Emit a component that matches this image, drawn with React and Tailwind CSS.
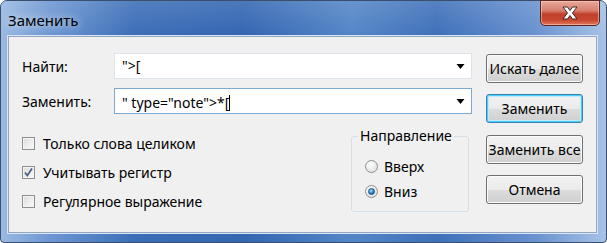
import React from "react";

const font = { fontFamily: '"Noto Sans", "Open Sans", sans-serif' };

function Arrow() {
  return (
    <svg width="9" height="5" viewBox="0 0 9 5" className="shrink-0">
      <path d="M0.5 0 H8.5 L4.5 5 Z" fill="#000" />
    </svg>
  );
}

function Combo({ value, focused, caret }) {
  return (
    <div
      className={
        "flex h-[26px] flex-1 items-center bg-white pl-[7px] pr-[6px] border " +
        (focused ? "border-[#7ea8d6]" : "border-[#dde3ea]")
      }
    >
      <span className="flex-1 whitespace-pre text-[14px] leading-none text-black">
        {value}
        {caret && <span className="inline-block h-[16px] w-px translate-y-[3px] bg-black" />}
      </span>
      <Arrow />
    </div>
  );
}

function Button({ children, def, className = "" }) {
  return (
    <div
      className={
        "flex h-[29px] w-[97px] items-center justify-center rounded-[3px] border text-[14px] text-black bg-[linear-gradient(#f2f2f2_0%,#ebebeb_50%,#dddddd_51%,#cfcfcf_100%)] " +
        (def
          ? "border-[#3c7fb1] shadow-[inset_0_0_0_1px_#48d0f8,inset_0_0_0_2px_#bfeafc] "
          : "border-[#707070] shadow-[inset_0_0_0_1px_#fbfbfb] ") +
        className
      }
    >
      {children}
    </div>
  );
}

function Check({ checked, label }) {
  return (
    <div className="flex h-[29px] items-center">
      <div className="flex h-[13px] w-[13px] items-center justify-center border border-[#8f8f8f] bg-[linear-gradient(135deg,#dcdcdc,#fbfbfb)] shadow-[inset_0_0_0_1px_#f4f4f4]">
        {checked && (
          <svg width="11" height="11" viewBox="0 0 11 11">
            <path d="M2 5.5 L4.3 8.5 L9 1.5" fill="none" stroke="#4d6185" strokeWidth="1.8" />
          </svg>
        )}
      </div>
      <span className="ml-[8px] text-[14px] text-black">{label}</span>
    </div>
  );
}

function Radio({ checked, label }) {
  return (
    <div className="flex h-[25px] items-center">
      <div className="flex h-[13px] w-[13px] items-center justify-center rounded-full border border-[#8f8f8f] bg-[radial-gradient(circle_at_40%_35%,#ffffff,#d8d8d8)]">
        {checked && (
          <div className="h-[7px] w-[7px] rounded-full border border-[#1c4f7f] bg-[radial-gradient(circle_at_40%_35%,#aee3ff,#1b7cc4_60%,#0c4f8a)]" />
        )}
      </div>
      <span className="ml-[6px] text-[14px] text-black">{label}</span>
    </div>
  );
}

export default function App() {
  return (
    <div style={font} className="relative h-[243px] w-[607px] overflow-hidden bg-[#ffffff]">
      <div className="flex h-[243px] w-[607px] flex-col rounded-t-[7px] rounded-b-[4px] border border-[#3b4e6b] bg-[linear-gradient(90deg,#9ab9e2_0%,#6d97d2_8%,#3c6eb7_22%,#3466b2_40%,#5486c7_58%,#3f70b9_72%,#6891cf_88%,#a7c2e6_100%)]">
        {/* title bar */}
        <div className="relative flex h-[34px] items-center bg-[linear-gradient(180deg,rgba(255,255,255,0.12),rgba(255,255,255,0))]">
          <span className="ml-[7px] mt-[4px] text-[15px] text-black [text-shadow:0_0_8px_rgba(255,255,255,0.9)]">
            Заменить
          </span>
          <div className="absolute right-[6px] top-[-1px] flex h-[26px] w-[60px] items-center justify-center rounded-b-[5px] border border-[#5a2620] bg-[linear-gradient(180deg,#e9a899_0%,#d7806f_40%,#c0402c_55%,#c9472f_80%,#e07a5e_100%)] shadow-[inset_0_0_0_1px_rgba(255,220,210,0.5)]">
            <svg width="20" height="14" viewBox="0 0 20 14">
              <path
                d="M3 1 H7.5 L10 4.5 L12.5 1 H17 L12.5 7 L17 13 H12.5 L10 9.5 L7.5 13 H3 L7.5 7 Z"
                fill="#ffffff"
                stroke="#3b2a2a"
                strokeWidth="1"
                strokeLinejoin="round"
              />
            </svg>
          </div>
        </div>
        {/* client */}
        <div className="ml-[6px] mr-[8px] h-[199px] border border-[#dbe6f4]">
          <div className="flex h-full border border-[#93a6bf] bg-[#f0f0f0] pl-[13px] pt-[16px]">
            <div className="flex w-[450px] flex-col">
              <div className="flex items-center">
                <span className="w-[92px] text-[14px] text-black">Найти:</span>
                <Combo value={'">['} />
              </div>
              <div className="mt-[9px] flex items-center">
                <span className="w-[92px] text-[14px] text-black">Заменить:</span>
                <Combo value={'" type="note">*['} focused caret />
              </div>
              <div className="mt-[9px] flex">
                <div className="mt-[6px] flex flex-1 flex-col">
                  <Check label="Только слова целиком" />
                  <Check checked label="Учитывать регистр" />
                  <Check label="Регулярное выражение" />
                </div>
                <div className="relative mr-[3px] mt-[13px] h-[76px] w-[118px] rounded-[3px] border border-[#d5dfe5]">
                  <span className="absolute left-[6px] top-[-11px] bg-[#f0f0f0] px-[2px] text-[14px] leading-[20px] text-black">
                    Направление
                  </span>
                  <div className="ml-[13px] mt-[17px] flex flex-col">
                    <Radio label="Вверх" />
                    <Radio checked label="Вниз" />
                  </div>
                </div>
              </div>
            </div>
            <div className="ml-[14px] mt-[1px] flex flex-col">
              <Button>Искать далее</Button>
              <Button def className="mt-[11px]">Заменить</Button>
              <Button className="mt-[12px]">Заменить все</Button>
              <Button className="mt-[11px]">Отмена</Button>
            </div>
          </div>
        </div>
      </div>
    </div>
  );
}
